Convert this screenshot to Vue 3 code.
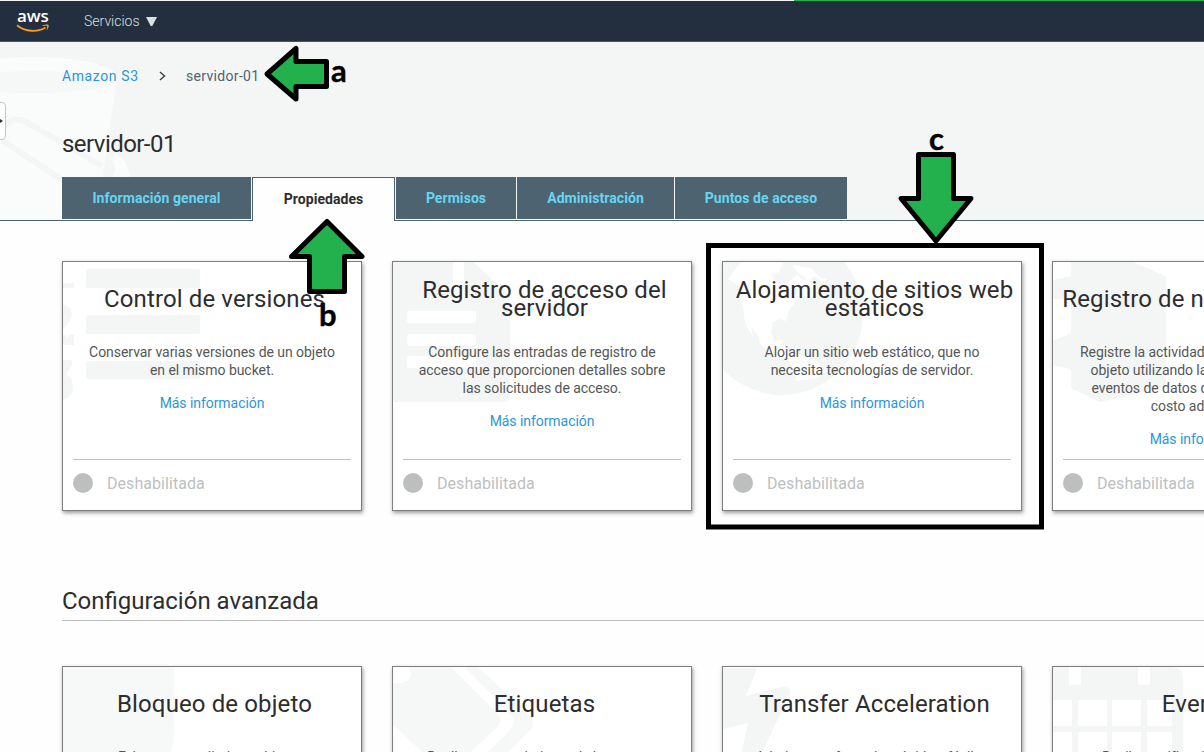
<script setup>
const tabs = [
  { label: 'Información general', cls: 'general' },
  { label: 'Propiedades', cls: 'active' },
  { label: 'Permisos', cls: 'permisos' },
  { label: 'Administración', cls: 'admin' },
  { label: 'Puntos de acceso', cls: 'puntos' }
]
const basic = [
  { icon: 'list', title: ['Control de versiones'], body: ['Conservar varias versiones de un objeto', 'en el mismo bucket.'] },
  { icon: 'doc', title: ['Registro de acceso del', 'servidor'], body: ['Configure las entradas de registro de', 'acceso que proporcionen detalles sobre', 'las solicitudes de acceso.'] },
  { icon: 'globe', title: ['Alojamiento de sitios web', 'estáticos'], body: ['Alojar un sitio web estático, que no', 'necesita tecnologías de servidor.'] },
  { icon: 'box', title: ['Registro de nivel de objeto'], body: ['Registre la actividad de la API a nivel de', 'objeto utilizando la característica de', 'eventos de datos de CloudTrail (con', 'costo adicional).'] }
]
const advanced = [
  { icon: 'lock', title: ['Bloqueo de objeto'], body: ['Evitar que se eliminen objetos.'] },
  { icon: 'tag', title: ['Etiquetas'], body: ['Realice un seguimiento de los costos'] },
  { icon: 'bolt', title: ['Transfer Acceleration'], body: ['Admite transferencias rápidas, fáciles'] },
  { icon: 'calendar', title: ['Eventos'], body: ['Reciba notificaciones cuando se'] }
]
const rows = [
  { id: 'basic', cards: basic },
  { id: 'advanced', heading: 'Configuración avanzada', cards: advanced }
]
</script>

<template>
  <div class="page">
    <header class="nav">
      <div class="logo">
        <span>aws</span>
        <svg width="34" height="9" viewBox="0 0 34 9">
          <path d="M1 1.2C9 8 22 8.400 29.500 3.500" fill="none" stroke="#f79a1f" stroke-width="1.800" />
          <path d="M26.500 1.300C29 .4 31.500.2 32.500.9C33.200 2 32.500 4.500 30.500 6.500C31 4 31.500 2.700 31 2.200C30.300 1.600 28.500 1.900 26.500 2Z" fill="#f79a1f" />
        </svg>
      </div>
      <span class="services">Servicios</span>
      <svg class="caret" width="11" height="9" viewBox="0 0 11 9"><path d="M0 0H11L6.300 9H4.700Z" fill="#d9e0e0" /></svg>
    </header>

    <section class="hero">
      <svg class="bucket" width="140" height="178" viewBox="0 0 140 178">
        <path d="M-50 34C-45 9 112 9 117 34L103 133L132 178H0V178H-50Z" fill="#fafcfb" />
        <ellipse cx="33" cy="40" rx="82" ry="11" fill="#f6f8f8" />
        <path d="M117 38L103 133Q105 138 101 142L140 178V36Z" fill="#f4f6f6" />
        <path d="M102 124L26 80Q13 74 6 82Q-4 94 6 101L64 139" fill="none" stroke="#f4f6f6" stroke-width="6" />
        <path d="M115 112Q127 116 130 136H112Q119 126 112 118Z" fill="#fafcfb" />
      </svg>
      <div class="crumbs">
        <a>Amazon S3</a>
        <svg width="7" height="10" viewBox="0 0 7 10"><path d="M1 1L5.500 5L1 9" fill="none" stroke="#444" stroke-width="1.500" /></svg>
        <span>servidor-01</span>
      </div>
      <h1><span>servidor-01</span></h1>
      <nav class="tabs">
        <div v-for="t in tabs" :key="t.label" class="tab" :class="t.cls"><span>{{ t.label }}</span></div>
      </nav>
    </section>

    <main>
      <div v-for="row in rows" :key="row.id" class="group" :class="row.id">
        <h2 v-if="row.heading"><span>{{ row.heading }}</span></h2>
        <div class="cards">
          <article v-for="c in row.cards" :key="c.title[0]" class="card" :class="c.icon">
            <svg class="art" width="298" height="248" viewBox="0 0 298 248" fill="#f4f6f6">
              <g v-if="c.icon === 'list'">
                <rect x="23" y="7" width="114" height="19" rx="2" />
                <rect x="23" y="53" width="114" height="19" rx="2" />
                <rect x="23" y="99" width="114" height="18" rx="2" />
                <path d="M0 21H11V26H0ZM0 43Q8 44 9 52Q8 59 2 65L0 67ZM0 73H2L4 76L6 73H11V83H0ZM0 98H9V103L3 112Q11 117 10 127Q9 136 0 138Z" />
              </g>
              <g v-else-if="c.icon === 'doc'">
                <path d="M0 0H60V38H117V134Q117 140 110 140H0Z" />
                <path d="M71 0H80L117 34V38H71Z" />
                <g fill="#fff"><rect x="14" y="49" width="69" height="12" rx="3" /><rect x="14" y="72" width="69" height="12" rx="3" /><rect x="14" y="94" width="69" height="12" rx="3" /></g>
              </g>
              <g v-else-if="c.icon === 'globe'">
                <circle cx="59" cy="52" r="81" />
                <path fill="#fff" d="M5 17L18 0H60L56 10L48 13L54 21L64 22L74 12L80 19L84 16L95 28L90 34L76 36L66 48L63 59L57 57L50 60L48 70L51 79L60 78L58 84L64 86L65 94L75 92L92 97L103 110L95 116L73 119V111L66 99L56 94L48 91L37 82L36 75L28 65L30 75L22 61L20 45L16 34L18 25Z" />
                <path fill="#fff" d="M69 3L80 5L88 6L98 16L105 17L100 20L91 14L87 18L76 12Z" />
              </g>
              <path v-else-if="c.icon === 'box'" d="M0 18L18 14V0H80L113 14V125L47 140L18 126V107L0 103V79L18 71V37H0Z" />
              <path v-else-if="c.icon === 'lock'" opacity=".7" d="M0 0H111V68Q110 82 104 95H0Z" />
              <g v-else-if="c.icon === 'tag'" opacity=".75">
                <path d="M0 16Q18 18 18 5L16 0H58L105 47Q110 53 104 60L75 88H33L0 58Z" />
                <path d="M72 0H85L138 50Q143 56 138 62L111 90H90L118 62Q124 54 116 46Z" />
              </g>
              <path v-else-if="c.icon === 'bolt'" d="M0 1H34L23 29L60 20Q69 19 67 26L38 88H18L25 56L0 62Z" />
              <g v-else>
                <path d="M0 0H120Q130 1 130 12V90H0Z" />
                <path fill="#fff" d="M16 0H28V16Q28 18 26 18H18Q16 18 16 16ZM85 0H97V16Q97 18 95 18H87Q85 18 85 16ZM0 33H19V59H0ZM25 33H54V59H25ZM59 33H88V59H59ZM94 33H119V59H94ZM0 65H19V90H0ZM25 65H54V90H25ZM59 65H88V90H59ZM94 65H119V90H94Z" />
              </g>
            </svg>
            <h3><span v-for="l in c.title" :key="l">{{ l }}</span></h3>
            <p class="body"><span v-for="l in c.body" :key="l">{{ l }}</span></p>
            <a class="more">Más información</a>
            <div class="status"><i></i><span>Deshabilitada</span></div>
          </article>
        </div>
      </div>
    </main>

    <div class="handle"><i></i></div>
    <svg class="marks" width="1204" height="752" viewBox="0 0 1204 752">
      <rect x="708.500" y="245.500" width="333" height="281.500" fill="none" stroke="#000" stroke-width="5" />
      <g fill="#23b14d" stroke="#000" stroke-width="5" stroke-linejoin="round">
        <path d="M267 74L296 48.500V61.500H326.500V86.500H296V99Z" />
        <path d="M327 221.500L362 256.500H344.500V291.500H309.500V256.500H291.500Z" />
        <path d="M918.500 154.500H953.500V198.500H971L936 241L901 198.500H918.500Z" />
      </g>
      <g class="letters"><text x="331" y="82">a</text><text x="319" y="326">b</text><text x="929" y="150">c</text></g>
    </svg>
    <div class="progress"></div>
  </div>
</template>

<style>
body { overflow: hidden; background: #fff; }
</style>
<style scoped>
* { box-sizing: border-box; }
.page { position: relative; width: 1204px; height: 752px; overflow: hidden; background: #fefefe; font-family: Roboto, "Liberation Sans", sans-serif; color: #2d2d2d; }
h1, h2, h3, p { margin: 0; font-weight: 400; }
.nav { height: 42px; background: #232f3e; border-top: 1px solid #f4f6f6; border-bottom: 1px solid #4b5661; display: flex; align-items: center; padding-left: 16px; color: #d9e0e0; }
.logo { width: 34px; height: 40px; padding-top: 5px; display: flex; flex-direction: column; }
.logo span { font: 600 17px/20px "Open Sans", sans-serif; color: #fff; letter-spacing: -.1px; padding-left: 1px; }
.logo svg { margin-top: -2px; flex: none; }
.services { font-size: 14px; font-weight: 300; margin-left: 34px; width: 62px; white-space: nowrap; }
.hero { position: relative; height: 179px; background: #f4f6f6; border-bottom: 1px solid #4d6370; padding-left: 62px; }
.bucket { position: absolute; left: 0; top: 0; }
.crumbs { position: relative; display: flex; align-items: center; height: 18px; top: 25px; font-size: 14px; }
.crumbs a { width: 97px; color: #2e95d3; letter-spacing: .6px; }
.crumbs span { margin-left: 20px; color: #4d6370; letter-spacing: .32px; }
h1 { position: relative; margin-top: 67px; height: 34px; line-height: 34px; font-size: 24px; letter-spacing: -.55px; }
.tabs { position: relative; display: flex; gap: 1px; margin-top: 16px; height: 44px; }
.tab { height: 42px; background: #4d6370; color: #66d5f2; font-weight: 700; font-size: 14px; letter-spacing: .06px; display: flex; align-items: center; justify-content: center; box-shadow: 0 1px #fff; white-space: nowrap; }
.general { width: 189px; }
.active { width: 143px; height: 44px; background: #fefefe; color: #2d2d2d; border: 1px solid #4d6370; border-bottom: 0; box-shadow: none; padding-bottom: 2px; }
.permisos { width: 120px; }
.admin { width: 157px; }
.puntos { width: 172px; }
main { padding: 40px 0 0 62px; }
.cards { display: flex; gap: 30px; }
.card { position: relative; flex: none; width: 300px; height: 250px; background: #fff; border: 1px solid #7d7f7f; box-shadow: 1px 2px 4px rgba(0,0,0,.4); padding: 0 10px; text-align: center; }
.art { position: absolute; left: 0; top: 0; }
h3 { position: relative; height: 74px; display: flex; flex-direction: column; justify-content: center; font-size: 24px; line-height: 18px; letter-spacing: .12px; padding-left: 5px; margin: 0 -8px; }
h3 span, .body span { display: block; white-space: nowrap; }
.body { position: relative; padding-top: 7px; font-size: 14px; line-height: 18px; letter-spacing: -.05px; color: #545757; }
.more { position: relative; display: block; margin-top: 15px; font-size: 14px; line-height: 18px; color: #2e95d3; letter-spacing: -.06px; }
.status { position: absolute; left: 10px; right: 10px; bottom: 0; height: 51px; border-top: 1px solid #bdbebe; display: flex; align-items: center; padding-bottom: 5px; color: #bdbfbf; font-size: 16px; letter-spacing: .06px; }
.status i { width: 20px; height: 20px; border-radius: 50%; background: #bdbfbf; margin-right: 14px; }
.status span { padding-top: 2px; }
h2 { margin-top: 75px; height: 35px; line-height: 30px; border-bottom: 1px solid #bdbebe; font-size: 24px; letter-spacing: 0; margin-bottom: 45px; }
.handle { position: absolute; left: -10px; top: 102px; width: 16px; height: 38px; background: #fff; border: 1px solid #c4c6c6; border-radius: 4px; }
.handle i { position: absolute; left: 9px; top: 16px; border: 2px solid transparent; border-left: 3px solid #333; }
.marks { position: absolute; left: 0; top: 0; pointer-events: none; }
.letters { font: 700 31px Lato, sans-serif; fill: #000; stroke: #000; stroke-width: .4px; }
.progress { position: absolute; left: 794px; right: 0; top: 0; height: 1px; background: #23b14d; }
</style>
